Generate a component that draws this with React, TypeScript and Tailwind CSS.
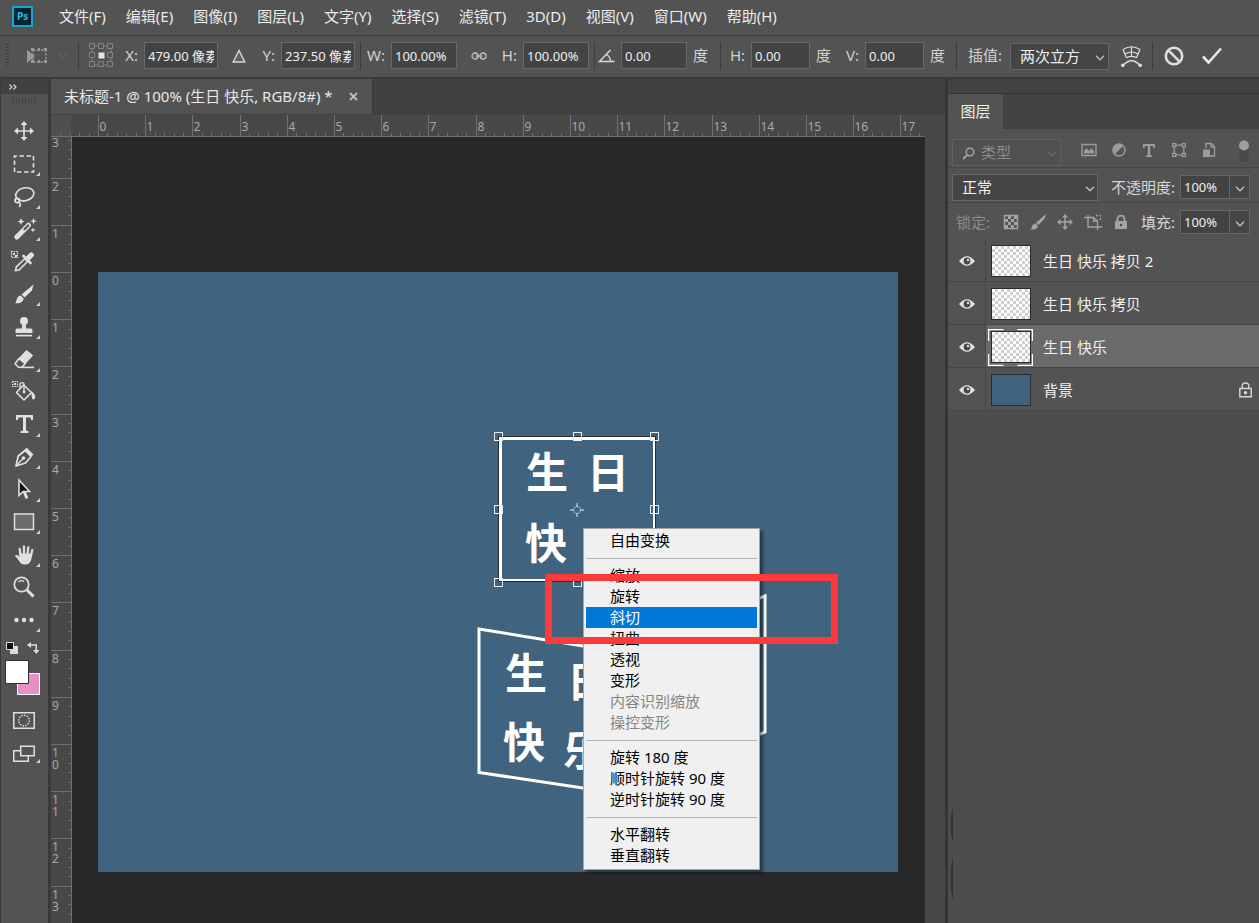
import React from 'react';

const MENUS = ['文件(F)', '编辑(E)', '图像(I)', '图层(L)', '文字(Y)', '选择(S)', '滤镜(T)', '3D(D)', '视图(V)', '窗口(W)', '帮助(H)'];

// ruler pitch, one centimetre
const CM = 47.2;

interface Tool {
  name: string;
  more?: boolean;
  icon: React.ReactNode;
}

const TOOLS: Tool[] = [
  {
    name: '移动工具',
    icon: (
      <>
        <path d="M12 4v16M4 12h16" stroke="currentColor" strokeWidth="1.6" />
        <path d="M12 2l3.5 4h-7zM12 22l3.5-4h-7zM2 12l4-3.5v7zM22 12l-4-3.5v7z" />
      </>
    ),
  },
  {
    name: '矩形选框工具',
    more: true,
    icon: <rect x="2.5" y="4" width="19" height="16" fill="none" stroke="currentColor" strokeWidth="1.6" strokeDasharray="4.5 2.5" strokeDashoffset="2" />,
  },
  {
    name: '套索工具',
    more: true,
    icon: (
      <g fill="none" stroke="currentColor" strokeWidth="1.7">
        <ellipse cx="12.8" cy="10.3" rx="9.2" ry="6.4" transform="rotate(-12 12.8 10.3)" />
        <circle cx="5.2" cy="16.5" r="2.2" />
        <path d="M6.5 18c2 1 2.200 3 .8 5" />
      </g>
    ),
  },
  {
    name: '魔棒工具',
    more: true,
    icon: (
      <>
        <path d="M4.800 20L16.500 8.200" stroke="currentColor" strokeWidth="5" strokeLinecap="round" />
        <path d="M12.500 12.200l3.700-3.700" stroke="#535353" strokeWidth="2.200" strokeLinecap="round" />
        <path d="M9 1l1 2.500 2.500 1L10 5.500 9 8 8 5.500 5.500 4.500 8 3.500zM21.500 1l.9 2.300 2.300.9-2.300.9-.9 2.300-.9-2.300-2.300-.9 2.300-.9zM21 10.500l.7 1.800 1.800.7-1.800.7-.7 1.800-.7-1.800-1.800-.7 1.800-.7z" />
      </>
    ),
  },
  {
    name: '吸管工具',
    icon: (
      <>
        <path d="M3.500 20.500l.8-3.500L13 8.500l2.700 2.700L7 20z" fill="none" stroke="currentColor" strokeWidth="1.600" />
        <path d="M11.500 6l7 7" stroke="currentColor" strokeWidth="2.600" strokeLinecap="round" />
        <path d="M15.500 8.800l3.800-3.800" stroke="currentColor" strokeWidth="5.200" strokeLinecap="round" />
        <path d="M-.5 1.500h6v6h-6z" fill="none" stroke="currentColor" strokeWidth="1.200" strokeDasharray="1.500 .8" />
        <path d="M1 3h2v2H1zM3 5h2v2H3z" />
      </>
    ),
  },
  {
    name: '画笔工具',
    more: true,
    icon: (
      <>
        <path d="M21.500 2.500L20 8.500l-7.500 7-3-3z" />
        <path d="M8.600 13.400l3 3c-.5 4-4.600 5.400-8.600 4.800 2-1.700 1.200-7.300 5.600-7.800z" />
      </>
    ),
  },
  {
    name: '仿制图章工具',
    more: true,
    icon: (
      <>
        <circle cx="12" cy="6" r="4" />
        <path d="M10.500 8h3l.8 5.500h4.700a1.500 1.500 0 011.500 1.500v3h-17v-3A1.500 1.500 0 015 13.500h4.700z" />
        <path d="M4 19.700h16v1.700H4z" />
      </>
    ),
  },
  {
    name: '橡皮擦工具',
    more: true,
    icon: (
      <>
        <path d="M14.500 3.500l6.200 4.900-7.200 7.800-6.300-5z" stroke="currentColor" strokeWidth="1" strokeLinejoin="round" />
        <path d="M7 11.500l6.300 5-3.300 3.800H6.500l-3.500-3.500z" fill="none" stroke="currentColor" strokeWidth="1.600" strokeLinejoin="round" />
        <path d="M9 19.600h13v1.600H9z" />
      </>
    ),
  },
  {
    name: '油漆桶工具',
    icon: (
      <>
        <path d="M11.500 5l8 7.500-7.500 7.500-7.500-7.500z" fill="none" stroke="currentColor" strokeWidth="1.600" strokeLinejoin="round" />
        <path d="M8 8V4.500c0-2.500 4-2.500 4 0V11" fill="none" stroke="currentColor" strokeWidth="1.400" />
        <circle cx="12" cy="12" r="1.400" />
        <path d="M19 11.500c3 1 4.500 3.500 4.200 6.500-.5 2-3 1.800-3.200-.2z" />
        <path d="M.5 1.500h5v5h-5z" fill="none" stroke="currentColor" strokeWidth="1.200" strokeDasharray="1.500 .8" />
        <path d="M2 3h2v2H2z" />
      </>
    ),
  },
  { name: '横排文字工具', more: true, icon: <path d="M4 3h17v5h-1.800l-.7-2.500h-4.500v13l2.500.7V21h-8v-1.800l2.500-.7v-13H6.500L5.800 8H4z" /> },
  {
    name: '钢笔工具',
    more: true,
    icon: (
      <>
        <path d="M4 21l2.200-10 6.800-5.500 6 6L13.500 18z" fill="none" stroke="currentColor" strokeWidth="1.700" strokeLinejoin="round" />
        <path d="M4 21l7-7.500" stroke="currentColor" strokeWidth="1.400" />
        <circle cx="11.500" cy="13" r="1.800" />
        <path d="M14.500 2.500l7 7-2.500 2.500-6.800-6.800z" />
      </>
    ),
  },
  {
    name: '路径选择工具',
    more: true,
    icon: (
      <>
        <path d="M7 3v15.500l4-4h6.500z" fill="#111111" stroke="currentColor" strokeWidth="1.600" />
        <path d="M12 14.500l3 7" stroke="currentColor" strokeWidth="3" />
      </>
    ),
  },
  { name: '矩形工具', more: true, icon: <rect x="2.5" y="4" width="19" height="15.500" fill="#6b6b6b" stroke="currentColor" strokeWidth="1.500" /> },
  {
    name: '抓手工具',
    more: true,
    icon: (
      <>
        <path d="M8.500 12L7.700 5.800M12 11V3.500M15.500 11.500l.8-7M18.800 13l1.500-6" stroke="currentColor" strokeWidth="2.300" strokeLinecap="round" />
        <path d="M7.300 10.500h12.700c0 6-1.500 11-6.500 11-4.500 0-5.500-2-7-4.500-1.300-2-2.700-3.300-3.800-4.300 1.300-1.600 3.600-.5 5 1.300z" />
      </>
    ),
  },
  {
    name: '缩放工具',
    icon: (
      <g fill="none" stroke="currentColor">
        <circle cx="9.500" cy="9.500" r="7.200" strokeWidth="1.800" />
        <path d="M6.500 7c1.500-1.700 4-1.700 5.500-.5" strokeWidth="1.400" />
        <path d="M15 15l6.500 6.500" strokeWidth="3" />
      </g>
    ),
  },
  {
    name: '编辑工具栏',
    more: true,
    icon: (
      <>
        <circle cx="4.500" cy="12" r="2.200" />
        <circle cx="12" cy="12" r="2.200" />
        <circle cx="19.500" cy="12" r="2.200" />
      </>
    ),
  },
];

function Chevron({ className = '' }: { className?: string }) {
  return (
    <svg className={className} width="10" height="6" viewBox="0 0 10 6" fill="none" stroke="currentColor" strokeWidth="1.3">
      <path d="M1 .8l4 4 4-4" />
    </svg>
  );
}

function MenuBar() {
  return (
    <nav className="flex h-9 items-center border-b border-[#3e3e3e] pb-0.5 pl-3 text-[15px]">
      <svg className="mr-[26px] shrink-0" width="21" height="21" viewBox="0 0 21 21">
        <rect x="1" y="1" width="19" height="19" fill="#04222f" stroke="#1ba3cf" strokeWidth="2" />
        <text x="10.500" y="14" textAnchor="middle" fontSize="10" fontWeight="700" fill="#2bb9e8" fontFamily="Open Sans, sans-serif">Ps</text>
      </svg>
      <div className="flex gap-5">
        {MENUS.map((m) => (
          <button key={m} className="whitespace-nowrap text-[#ececec]">{m}</button>
        ))}
      </div>
    </nav>
  );
}

interface FieldProps {
  label: React.ReactNode;
  name: string;
  value: string;
  width: string;
  unit?: string;
}

function Field({ label, name, value, width, unit }: FieldProps) {
  return (
    <label className="flex shrink-0 items-center text-[15px]">
      <span className="mr-1.5 flex w-4 justify-end whitespace-nowrap">{label}</span>
      <input
        aria-label={name}
        defaultValue={value}
        className={`h-[27px] ${width} border border-[#696969] bg-[#434343] px-[3px] text-[13px] text-[#efefef] outline-none`}
      />
      {unit && <span className="ml-1.5">{unit}</span>}
    </label>
  );
}

function Divider() {
  return <div className="h-7 w-px shrink-0 bg-[#3c3c3c]" />;
}

function OptionsBar() {
  return (
    <div className="flex h-[43px] items-center border-b-2 border-[#3a3a3a] pb-0.5 pl-1.5 text-[#d2d2d2]">
      <div className="h-6 w-[3px] shrink-0 bg-[repeating-linear-gradient(#3d3d3d_0_1px,#535353_1px_3px)]" />
      <svg className="ml-[17px] shrink-0" width="22" height="20" viewBox="0 0 22 20">
        <path d="M1 4v13l8-7z" fill="#9a9a9a" />
        <path d="M7 4h13v12H7z" fill="none" stroke="#9a9a9a" strokeWidth="1.300" strokeDasharray="2.500 1.500" />
        <path d="M5 2h3v3H5zM18 2h3v3h-3zM18 14h3v3h-3zM5 14h3v3H5zM12 2h2v3h-2zM12 14h2v3h-2z" fill="#9a9a9a" />
      </svg>
      <Chevron className="mx-2.5 shrink-0 text-[#626262]" />
      <Divider />
      <svg className="mr-2 ml-2.5 shrink-0" width="25" height="25" viewBox="0 0 25 25" fill="none" stroke="#848484">
        <path d="M6 3h4M15 3h4M6 22h4M15 22h4M3 6v4M3 15v4M22 6v4M22 15v4" />
        <path d="M.5 .5h5v5h-5zM9.500 .5h5v5h-5zM18.500 .5h5v5h-5zM.5 9.500h5v5h-5zM18.500 9.500h5v5h-5zM.5 18.500h5v5h-5zM9.500 18.500h5v5h-5zM18.500 18.500h5v5h-5z" />
        <path d="M9.500 9.500h6v6h-6z" fill="#e6e6e6" stroke="none" />
      </svg>
      <Field label="X:" name="X" value="479.00 像素" width="w-[74px]" />
      <button aria-label="使用参考点相关定位" className="mr-[13px] ml-[14px] shrink-0">
        <svg width="14" height="14" viewBox="0 0 14 14" fill="#626262" stroke="#d8d8d8" strokeWidth="1.400">
          <path d="M7 1.500L12.800 13H1.200z" />
        </svg>
      </button>
      <Field label="Y:" name="Y" value="237.50 像素" width="w-[74px]" />
      <div className="ml-[5px]"><Divider /></div>
      <div className="ml-2"><Field label="W:" name="W" value="100.00%" width="w-[66px]" /></div>
      <button aria-label="保持长宽比" className="mr-3.5 ml-3.5 shrink-0">
        <svg width="16" height="8" viewBox="0 0 16 8" fill="none" stroke="#c0c0c0" strokeWidth="1.300">
          <rect x="1" y="1" width="6" height="6" rx="3" />
          <rect x="9" y="1" width="6" height="6" rx="3" />
          <path d="M4.500 4h7" />
        </svg>
      </button>
      <Field label="H:" name="H" value="100.00%" width="w-[66px]" />
      <div className="mr-1 ml-[5px]"><Divider /></div>
      <Field
        name="旋转"
        value="0.00"
        width="w-[66px]"
        unit="度"
        label={
          <svg className="shrink-0" width="17" height="14" viewBox="0 0 17 14" fill="none" stroke="#d8d8d8" strokeWidth="1.400">
            <path d="M12.500 1L1.500 12.500h15M8.500 5.500c2.500 1.500 4 4 4 7" />
          </svg>
        }
      />
      <div className="mr-2 ml-3"><Divider /></div>
      <Field label="H:" name="水平斜切" value="0.00" width="w-[59px]" unit="度" />
      <div className="ml-3"><Field label="V:" name="垂直斜切" value="0.00" width="w-[59px]" unit="度" /></div>
      <div className="mx-[11px]"><Divider /></div>
      <label className="flex shrink-0 items-center text-[15px]">
        <span className="mr-2 whitespace-nowrap">插值:</span>
        <span className="relative mt-0.5">
          <select className="h-[27px] w-[99px] appearance-none border border-[#666666] bg-[#454545] pl-[9px] text-[15px] text-[#f0f0f0] outline-none">
            <option>两次立方</option>
          </select>
          <Chevron className="absolute top-3 right-1 text-[#bdbdbd]" />
        </span>
      </label>
      <button aria-label="变形模式" className="mr-2.5 ml-3 shrink-0">
        <svg width="21" height="22" viewBox="0 0 21 22" fill="none" stroke="#dedede" strokeWidth="1.200">
          <path d="M2 4.500Q10.500-1 19 4.500M4 9Q10.500 5 17 9M5.500 12.800Q10.500 10 15.500 12.800M2 4.500l3.500 8.300M19 4.500l-3.500 8.300M10.500 1.800v9.500" />
          <path d="M2 20.500Q10.500 11 19 20.500" strokeWidth="1.500" />
          <circle cx="1.800" cy="20.300" r="1.200" fill="#dedede" />
          <circle cx="19.200" cy="20.300" r="1.200" fill="#dedede" />
        </svg>
      </button>
      <Divider />
      <button aria-label="取消变换" className="ml-[11px] shrink-0">
        <svg width="20" height="20" viewBox="0 0 20 20" fill="none" stroke="#dedede" strokeWidth="2.600">
          <circle cx="10" cy="10" r="8.200" />
          <path d="M4.200 4.200l11.600 11.600" />
        </svg>
      </button>
      <button aria-label="提交变换" className="ml-[18px] shrink-0">
        <svg width="20" height="18" viewBox="0 0 20 18" fill="none" stroke="#e6e6e6" strokeWidth="2.600">
          <path d="M1 9.500l5.500 6L19 1.500" />
        </svg>
      </button>
    </div>
  );
}

function ToolBar() {
  return (
    <aside className="flex w-[51px] shrink-0 flex-col border-r-[3px] border-l border-[#3a3a3a] bg-[#535353] text-[#e0e0e0]">
      <div className="flex h-[15px] items-center bg-[#414141] pl-2">
        <svg width="8" height="6" viewBox="0 0 8 6" fill="none" stroke="#d8d8d8" strokeWidth="1.200">
          <path d="M.5 .5L3 3 .5 5.500M4.500 .5L7 3 4.500 5.500" />
        </svg>
      </div>
      <div className="mt-1 mb-3 ml-3 h-[5px] w-6 bg-[repeating-linear-gradient(90deg,#3f3f3f_0_1px,#535353_1px_3px)]" />
      <div className="flex h-[521px] flex-col">
        {TOOLS.map((t) => (
          <button key={t.name} aria-label={t.name} className="relative flex flex-1 items-center pl-[11px]">
            <svg className="overflow-visible" width="24" height="24" viewBox="0 0 24 24" fill="currentColor">{t.icon}</svg>
            {t.more && (
              <svg className="absolute right-2 bottom-1" width="4" height="4" viewBox="0 0 4 4" fill="#d0d0d0">
                <path d="M4 0v4H0z" />
              </svg>
            )}
          </button>
        ))}
      </div>
      <div className="mt-1.5 flex items-center justify-between pr-2 pl-[5px]">
        <svg width="12" height="12" viewBox="0 0 12 12">
          <path d="M4 4h8v8H4z" fill="#dcdcdc" />
          <path d="M.5 .5h7v7h-7z" fill="#111111" stroke="#dcdcdc" />
        </svg>
        <svg width="13" height="12" viewBox="0 0 13 12" fill="#dcdcdc">
          <path d="M0 3l4-3v2.200h6V8h2.500l-3.200 4L6 8h2.500V3.800H4V6z" />
        </svg>
      </div>
      <svg className="mt-1.5 ml-1" width="36" height="36" viewBox="0 0 36 36">
        <path d="M12.500 13.500h22v21h-22z" fill="#e591c5" stroke="#ffffff" />
        <path d="M.5 .5h23v23H.5z" fill="#ffffff" stroke="#303030" />
      </svg>
      <button aria-label="以快速蒙版模式编辑" className="mt-4 ml-3 w-[22px]">
        <svg width="22" height="17" viewBox="0 0 22 17" fill="none" stroke="currentColor">
          <rect x=".75" y=".75" width="20.500" height="15.500" strokeWidth="1.500" />
          <circle cx="11" cy="8.500" r="5.300" strokeWidth="1.400" strokeDasharray="1.500 1.200" />
        </svg>
      </button>
      <button aria-label="更改屏幕模式" className="mt-4 ml-3 flex items-end">
        <svg width="22" height="18" viewBox="0 0 22 18" fill="#535353" stroke="currentColor" strokeWidth="1.500">
          <path d="M.75 5.700h14.500v10.500H.75z" />
          <path d="M7.700 1.200h13.500v9.500H7.700z" />
        </svg>
        <svg className="ml-px" width="4" height="4" viewBox="0 0 4 4" fill="#d0d0d0">
          <path d="M4 0v4H0z" />
        </svg>
      </button>
    </aside>
  );
}

function HorizontalRuler() {
  const ticks = Array.from({ length: 92 }, (_, i) => i - 4);
  return (
    <svg className="h-[22px] w-full bg-[#484848]" fontSize="12" fill="#a8a8a8">
      <path d="M0 0h20v21H0z" fill="#4f4f4f" />
      <path d="M0 21.500h3000" stroke="#707070" />
      {ticks.map((i) => {
        const x = Math.round(47 + (i * CM) / 5) + 0.5;
        const major = i % 5 === 0;
        return (
          <React.Fragment key={i}>
            <path d={`M${x} ${major ? 0 : 18}V22`} stroke="#707070" />
            {major && <text x={x + 1} y="16">{i / 5}</text>}
          </React.Fragment>
        );
      })}
    </svg>
  );
}

function VerticalRuler() {
  const ticks = Array.from({ length: 85 }, (_, i) => i - 15);
  return (
    <svg className="w-[21px] shrink-0 bg-[#484848]" fontSize="12" fill="#a8a8a8">
      <path d="M20.500 0v3000" stroke="#707070" />
      {ticks.map((i) => {
        const y = Math.round(135 + (i * CM) / 5) + 0.5;
        const major = i % 5 === 0;
        return (
          <React.Fragment key={i}>
            <path d={`M${major ? 0 : 17} ${y}H21`} stroke="#707070" />
            {major &&
              String(Math.abs(i / 5)).split('').map((c, n) => (
                <text key={n} x="1" y={Math.max(y + 12, 10) + n * 12}>{c}</text>
              ))}
          </React.Fragment>
        );
      })}
    </svg>
  );
}

function Artwork() {
  const handles = [[401, 165], [480, 165], [557, 165], [401, 238], [557, 238], [401, 311], [480, 311]];
  return (
    <svg className="block" width="800" height="600" viewBox="0 0 800 600">
      <g fill="none" stroke="#ffffff" strokeWidth="3">
        <path d="M381 357L525 380.500V522L381 500.500z" />
        <path d="M667 324L525 380.500V522L667 460z" />
        <path d="M402.500 166.500h154v142h-154z" />
      </g>
      <path d="M400.500 164.500h157v145h-157z" fill="none" stroke="#2b2b2b" />
      <g fill="#ffffff" fontSize="42" fontWeight="700" textAnchor="middle">
        <text x="449" y="216">生</text>
        <text x="510" y="216">日</text>
        <text x="448" y="287">快</text>
        <text x="428" y="417">生</text>
        <text x="490" y="425">日</text>
        <text x="426" y="486">快</text>
        <text x="486" y="494">乐</text>
      </g>
      <g fill="none" stroke="#e8eef2">
        {handles.map(([x, y]) => (
          <rect key={`${x}-${y}`} x={x - 4.5} y={y - 4.5} width="8" height="8" />
        ))}
        <circle cx="479" cy="238" r="3.500" stroke="#a9a9a9" />
        <path d="M472 238h4M482 238h4M479 231v4M479 241v4" />
      </g>
    </svg>
  );
}

const CONTEXT_GROUPS = [
  ['自由变换'],
  ['缩放', '旋转', '斜切', '扭曲', '透视', '变形', '内容识别缩放', '操控变形'],
  ['旋转 180 度', '顺时针旋转 90 度', '逆时针旋转 90 度'],
  ['水平翻转', '垂直翻转'],
];
const DISABLED = ['内容识别缩放', '操控变形'];

function ContextMenu() {
  return (
    <div role="menu" className="absolute top-[256px] left-[485px] w-[177px] border border-[#a5a5a5] bg-[#f0f0f0] px-0.5 pt-px pb-[3px] text-[15px] text-black shadow-[3px_3px_3px_rgba(0,0,0,0.45)]">
      {CONTEXT_GROUPS.map((group, g) => (
        <div key={g}>
          {g > 0 && <div className="mt-[7px] mb-1.5 h-px bg-[#b5b5b5]" />}
          {group.map((item) => (
            <button
              key={item}
              role="menuitem"
              disabled={DISABLED.includes(item)}
              className={`block h-[21px] w-full pl-6 text-left leading-[21px] whitespace-nowrap disabled:text-[#858585] ${item === '斜切' ? 'bg-[#0078d7] text-white' : ''}`}
            >
              {item}
            </button>
          ))}
        </div>
      ))}
    </div>
  );
}

function DocumentArea() {
  return (
    <main className="flex min-w-0 flex-1 flex-col bg-[#484848]">
      <div className="flex h-9 shrink-0 bg-[#414141]">
        <div className="flex h-[35px] items-center gap-4 border-r border-[#3a3a3a] bg-[#535353] pr-3.5 pl-[13px] text-[15px] text-[#e8e8e8]">
          <span className="whitespace-nowrap">未标题-1 @ 100% (生日 快乐, RGB/8#) *</span>
          <button aria-label="关闭">
            <svg width="9" height="9" viewBox="0 0 9 9" stroke="#bcbcbc" strokeWidth="2">
              <path d="M1 1l7 7M8 1L1 8" />
            </svg>
          </button>
        </div>
      </div>
      <div className="flex min-h-0 flex-1 flex-col pr-5">
        <HorizontalRuler />
        <div className="flex min-h-0 flex-1">
          <VerticalRuler />
          <div className="min-w-0 flex-1 overflow-hidden bg-[#282828] pt-[135px] pl-[26px]">
            <div className="relative h-[600px] w-[800px] bg-[#40647f]">
              <Artwork />
              <ContextMenu />
              <div className="absolute top-[302px] left-[447px] h-[70px] w-[293px] border-[7px] border-[#fd3a3a]" />
            </div>
          </div>
        </div>
      </div>
    </main>
  );
}

interface Layer {
  name: string;
  selected?: boolean;
  background?: boolean;
}

const LAYERS: Layer[] = [
  { name: '生日 快乐 拷贝 2' },
  { name: '生日 快乐 拷贝' },
  { name: '生日 快乐', selected: true },
  { name: '背景', background: true },
];

function LayerRow({ name, selected, background }: Layer) {
  return (
    <li className="flex h-[43px] border-b border-[#454545]">
      <button aria-label="指示图层可见性" className="flex w-[38px] shrink-0 items-center justify-center border-r border-[#454545] pt-0.5">
        <svg width="16" height="10" viewBox="0 0 16 10">
          <path d="M0 5Q8-4.500 16 5 8 14.500 0 5z" fill="#e2e2e2" />
          <circle cx="8" cy="5" r="3.400" fill="#484848" />
          <circle cx="9" cy="4" r="1.200" fill="#e2e2e2" />
        </svg>
      </button>
      <div className={`flex flex-1 items-center pt-0.5 pl-0.5 ${selected ? 'bg-[#6a6a6a]' : ''}`}>
        <div className="relative flex h-[37px] w-[45px] items-center justify-center">
          <div
            className={`h-8 w-10 border border-[#2c2c2c] ${background ? 'bg-[#40647f]' : 'bg-[repeating-conic-gradient(#cfcfcf_0_25%,#ffffff_0_50%)] bg-[length:6px_6px]'}`}
          />
          {selected && (
            <svg className="absolute inset-0" width="45" height="37" viewBox="0 0 45 37" fill="none" stroke="#ffffff">
              <path d="M.5 12V.5h15M29.500 .5h15V12M44.500 25v11.500h-15M15.500 36.500H.5V25" strokeWidth="1.500" />
            </svg>
          )}
        </div>
        <span className="ml-[10px] text-[15px] text-[#f2f2f2]">{name}</span>
        {background && (
          <svg className="mr-[7px] ml-auto" width="13" height="16" viewBox="0 0 13 16" fill="none" stroke="#d5d5d5" strokeWidth="1.400">
            <path d="M.8 6.500h11.400v8.300H.8zM3.200 6.500V4c0-4 6.600-4 6.600 0v2.500" />
            <circle cx="6.500" cy="10.700" r="1" fill="#d5d5d5" />
          </svg>
        )}
      </div>
    </li>
  );
}

function PercentField({ label }: { label: string }) {
  return (
    <div className="flex shrink-0 items-center">
      <label className="flex items-center">
        <span className="mr-[5px] text-[15px] whitespace-nowrap text-[#d6d6d6]">{label}</span>
        <input defaultValue="100%" className="h-6 w-[50px] border border-[#666666] bg-[#434343] pl-[3px] text-[13px] text-[#efefef] outline-none" />
      </label>
      <button aria-label={`${label} 滑块`} className="flex h-6 w-5 items-center justify-center border border-l-0 border-[#666666] bg-[#454545] pt-1 text-[#c4c4c4]">
        <Chevron />
      </button>
    </div>
  );
}

function FilterIcons() {
  return (
    <div className="flex gap-[14px] text-[#9c9c9c]">
      <svg width="16" height="16" viewBox="0 0 16 16" fill="currentColor">
        <path d="M1 2.500h14v11H1z" fill="none" stroke="currentColor" strokeWidth="1.400" />
        <path d="M3 11.500V9l2.500-3L8 9l2.500-3L13 9v2.500z" />
      </svg>
      <svg width="16" height="16" viewBox="0 0 16 16" fill="currentColor">
        <circle cx="8" cy="8" r="6" fill="#555555" stroke="currentColor" strokeWidth="1.400" />
        <path d="M12.500 3.500a6.300 6.300 0 00-9 9z" />
      </svg>
      <svg width="16" height="16" viewBox="0 0 16 16" fill="currentColor">
        <path d="M2 2h12v4h-1.500l-.5-2H9.200v9l1.800.5V15H5v-1.500l1.800-.5V4H4l-.5 2H2z" />
      </svg>
      <svg width="16" height="16" viewBox="0 0 16 16" fill="none" stroke="currentColor" strokeWidth="1.300">
        <path d="M1.700 1.700h3v3h-3zM11.300 1.700h3v3h-3zM1.700 11.300h3v3h-3zM11.300 11.300h3v3h-3zM4.700 3.200h6.600M4.700 12.800h6.600M3.200 4.700v6.600M12.800 4.700v6.600" />
      </svg>
      <svg width="16" height="16" viewBox="0 0 16 16">
        <path d="M5 6V1.500h5.500l3 3V14H9" fill="none" stroke="currentColor" strokeWidth="1.400" />
        <path d="M10 1.500V5h3.500" fill="none" stroke="currentColor" strokeWidth="1.400" />
        <path d="M2 7.500h7V15H2z" fill="currentColor" />
      </svg>
    </div>
  );
}

function LockIcons() {
  return (
    <div className="flex gap-[11px] text-[#a4a4a4]">
      <svg width="16" height="16" viewBox="0 0 16 16" fill="currentColor">
        <path d="M1.500 1.500h13v13h-13z" fill="none" stroke="currentColor" strokeWidth="1.400" />
        <path d="M5 2h3v3H5zM11 2h3v3h-3zM2 5h3v3H2zM8 5h3v3H8zM5 8h3v3H5zM11 8h3v3h-3zM2 11h3v3H2zM8 11h3v3H8z" />
      </svg>
      <svg width="16" height="16" viewBox="0 0 16 16" fill="currentColor">
        <path d="M16 0l-1 4-6.500 7L6 8.700zM5.500 9.500L8 12c-.5 3-4 4-8 3.500 2.500-1 1.500-5.500 5.500-6z" />
      </svg>
      <svg width="16" height="16" viewBox="0 0 16 16" fill="currentColor">
        <path d="M8 2v12M2 8h12" stroke="currentColor" strokeWidth="1.500" />
        <path d="M8 0l3 3.500H5zM8 16l3-3.500H5zM0 8l3.500-3v6zM16 8l-3.500-3v6z" />
      </svg>
      <svg width="18" height="16" viewBox="0 0 18 16" fill="none" stroke="currentColor" strokeWidth="1.300">
        <path d="M4 1v12h14M0 3.500h9.500l4 3.500v9M9.500 3.500V7h4" />
        <path d="M12 1.500h4.500V6" strokeDasharray="2 1.500" />
      </svg>
      <svg width="16" height="16" viewBox="0 0 16 16">
        <path d="M2 7h12v8H2z" fill="currentColor" />
        <path d="M4.500 7V5c0-4.500 7-4.500 7 0v2" fill="none" stroke="currentColor" strokeWidth="1.800" />
        <circle cx="8" cy="11" r="1.200" fill="#4b4b4b" />
      </svg>
    </div>
  );
}

function LayersPanel() {
  return (
    <aside className="flex w-[314px] shrink-0 flex-col border-l-[3px] border-[#353535] bg-[#4d4d4d]">
      <div className="h-[15px] border-b border-[#303030] bg-[#424242]" />
      <div className="flex h-[35px] bg-[#424242]">
        <button className="h-full w-[55px] bg-[#535353] text-[15px] text-[#efefef]">图层</button>
      </div>
      <div className="bg-[#535353]">
        <div className="flex h-[39px] items-center border-b border-[#454545] pt-2 pr-[9px] pl-1">
          <label className="relative shrink-0">
            <select aria-label="过滤图层" className="h-[27px] w-[109px] appearance-none border border-[#5f5f5f] bg-[#505050] pl-7 text-[15px] text-[#8d8d8d] outline-none">
              <option>类型</option>
            </select>
            <svg className="absolute top-2 left-2.5" width="13" height="13" viewBox="0 0 13 13" fill="none" stroke="#a0a0a0">
              <circle cx="8" cy="5" r="3.800" strokeWidth="1.500" />
              <path d="M5.500 7.800L1 12" strokeWidth="2" />
            </svg>
            <Chevron className="absolute top-3 right-1 text-[#676767]" />
          </label>
          <div className="ml-5 pb-1"><FilterIcons /></div>
          <button aria-label="打开图层过滤" className="ml-auto">
            <svg width="12" height="24" viewBox="0 0 12 24">
              <rect x="1.500" y="6" width="9" height="16" fill="#4a4a4a" />
              <circle cx="6" cy="5.500" r="5" fill="#a0a0a0" />
            </svg>
          </button>
        </div>
        <div className="flex h-[35px] items-center justify-between border-b border-[#454545] pt-1 pr-[9px] pl-1">
          <span className="relative">
            <select aria-label="混合模式" className="h-[27px] w-[146px] appearance-none border border-[#666666] bg-[#454545] pl-[9px] text-[15px] text-[#f2f2f2] outline-none">
              <option>正常</option>
            </select>
            <Chevron className="absolute top-3 right-[3px] text-[#c4c4c4]" />
          </span>
          <PercentField label="不透明度:" />
        </div>
        <div className="flex h-9 items-center justify-between pt-0.5 pr-[9px] pl-2">
          <span className="text-[15px] whitespace-nowrap text-[#8d8d8d]">锁定:</span>
          <LockIcons />
          <PercentField label="填充:" />
        </div>
        <ul>
          {LAYERS.map((l) => (
            <LayerRow key={l.name} {...l} />
          ))}
        </ul>
      </div>
      <div className="flex flex-1 items-end pb-[22px] pl-0.5">
        <svg width="4" height="94" viewBox="0 0 4 94" fill="#333333">
          <path d="M3 0v36Q-2 18 3 0zM3 49v45Q-2 71 3 49z" />
        </svg>
      </div>
    </aside>
  );
}

export default function App() {
  return (
    <div className="flex min-h-screen flex-col bg-[#535353] font-['Noto_Sans','Noto_Sans_CJK_SC',sans-serif]">
      <MenuBar />
      <OptionsBar />
      <div className="flex flex-1">
        <ToolBar />
        <DocumentArea />
        <LayersPanel />
      </div>
    </div>
  );
}
